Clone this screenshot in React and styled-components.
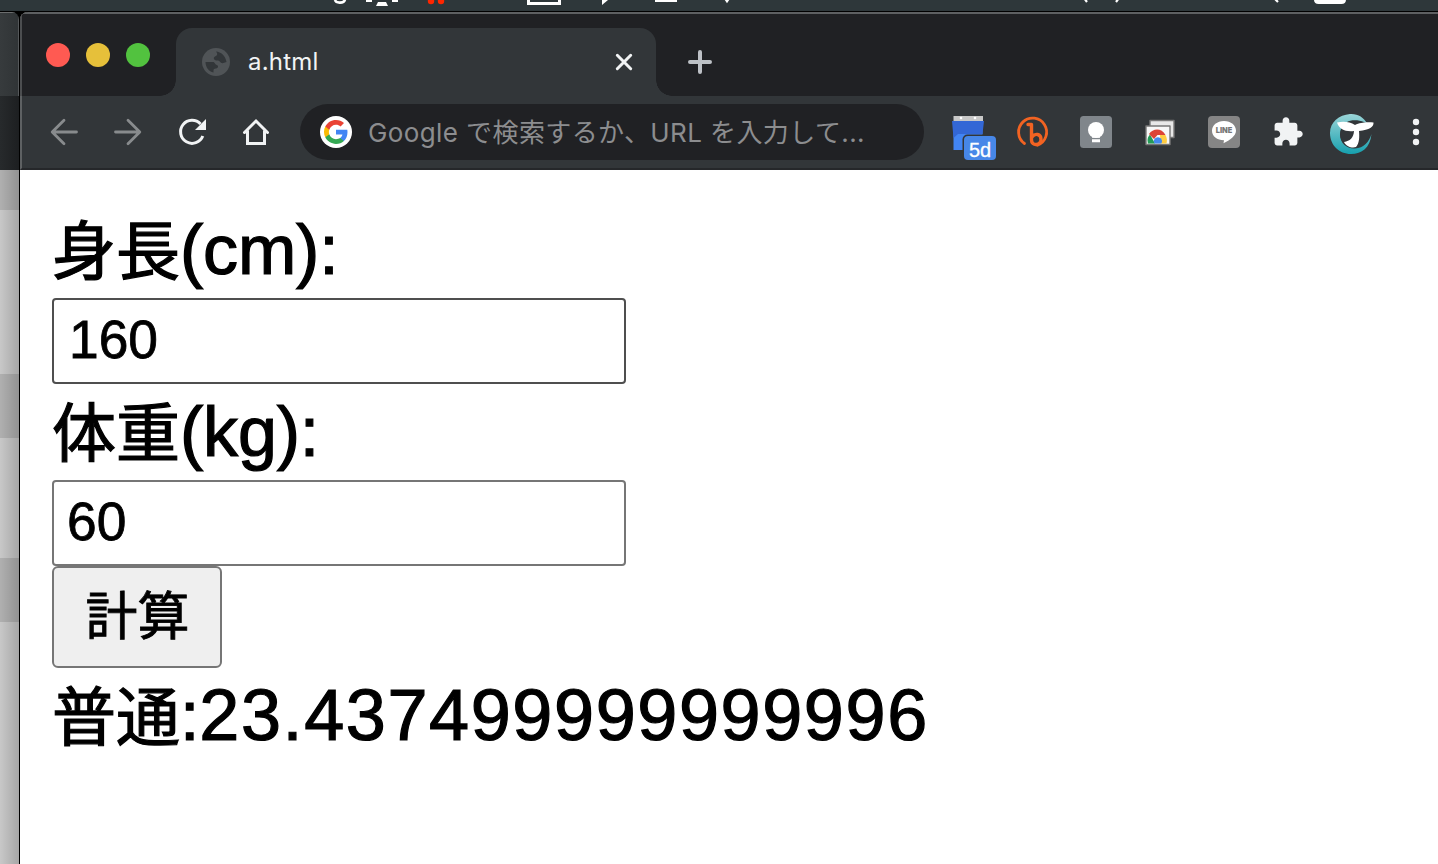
import React, { useState } from 'react'
import styled, { createGlobalStyle } from 'styled-components'

const App = () => {
    const [height, setHeight] = useState('160');
    const [weight, setWeight] = useState('60');
    const [result, setResult] = useState({ label: '普通', bmi: '23.437499999999996' });

    const calculate = () => {
        const m = Number(height) / 100;
        const bmi = Number(weight) / (m * m);
        const label = bmi < 18.5 ? '痩せ' : bmi < 25 ? '普通' : '肥満';
        setResult({ label, bmi: String(bmi) });
    }

    return (
        <StScreen>
            <GlobalStyle />
            <MenuBar />
            <StDesktop>
                <StBackWindow>
                    <StBackTabs />
                    <StBackToolbar />
                    <StBackPage />
                </StBackWindow>
                <StWindow>
                    <TabStrip />
                    <Toolbar />
                    <StPage>
                        <StLabel>身長<StLatin>(cm):</StLatin></StLabel>
                        <StInput $active value={height} onChange={(e) => setHeight(e.target.value)} />
                        <StLabel>体重<StLatin>(kg):</StLatin></StLabel>
                        <StInput value={weight} onChange={(e) => setWeight(e.target.value)} />
                        <StButton onClick={calculate}>計算</StButton>
                        <StLabel>{result.label}<StLatin>:</StLatin><StLatin $wide>{result.bmi}</StLatin></StLabel>
                    </StPage>
                </StWindow>
            </StDesktop>
        </StScreen>
    )
}

const MenuBar = () => (
    <StMenuBar>
        <svg width="1438" height="12" fill="none" stroke="#fff" strokeWidth="2.6">
            <path d="M335 0c1 3.600 9 3.600 10-.5" />
            <path d="M366 .5h6M392 .5h6" strokeWidth="3" />
            <path d="M378 2h8l2 4h-12z" fill="#fff" stroke="none" />
            <circle cx="431" cy="1" r="3.200" fill="#ff2600" stroke="none" />
            <circle cx="441" cy="1" r="3.200" fill="#ff2600" stroke="none" />
            <path d="M528.500-2v5.500h31V-2" strokeWidth="3" />
            <path d="M602 0h6l-6 5z" fill="#fff" stroke="none" />
            <path d="M655 .8h22" strokeWidth="2.400" />
            <path d="M725-2l2 3 2-3" />
            <path d="M1084-2l3 4M1119-2l-3 4M1274-2l4 4" strokeWidth="2.200" />
            <path d="M1314-2v1.500c0 3 1.500 4.500 4.500 4.500h23c3 0 4.500-1.500 4.500-4.500V-2z" fill="#fff" stroke="none" />
        </svg>
    </StMenuBar>
)

const TabStrip = () => (
    <StTabStrip>
        <StLights>
            <StLight $color="#ff5a52" />
            <StLight $color="#e6c03a" />
            <StLight $color="#52c23f" />
        </StLights>
        <StTab>
            <svg width="28" height="28">
                <circle cx="14" cy="14" r="14" fill="#505457" />
                <g fill="#323639">
                    <path d="M14 3.500c5 .5 9.500 4 10.500 10.500l-4 1.200c-2.500 0-2.500-2.700-5-2.700-1.500 0-3-.3-3.500-1.500-.8-2 1.500-2.500 2.800-3.700C15.800 6 15 5 14 3.500z" />
                    <path d="M3.500 14h7.500c2 0 1.500 2.500 4 3 1.500.5 1.300 2.700 0 3.200-1.500.6-3.500.3-3.500 2v2.200C7 23.500 3.500 19.500 3.500 14z" />
                </g>
            </svg>
            <StTabTitle>a.html</StTabTitle>
            <svg width="20" height="20" stroke="#f1f3f4" strokeWidth="3" strokeLinecap="round">
                <path d="M3.300 3.300l13.400 13.400M16.700 3.300L3.300 16.700" />
            </svg>
        </StTab>
        <StNewTab width="26" height="26" stroke="#bdc1c6" strokeWidth="4" strokeLinecap="round">
            <path d="M3 13h20M13 3v20" />
        </StNewTab>
    </StTabStrip>
)

const Toolbar = () => (
    <StToolbar>
        <StSlot $muted>
            <path d="M44.500 36H20.500M32 24.200L20.200 36 32 47.800" />
        </StSlot>
        <StSlot $muted>
            <path d="M19.500 36h24M32 24.200L43.800 36 32 47.800" />
        </StSlot>
        <StSlot>
            <path d="M42.800 40A11.500 11.500 0 1 1 40.500 28" strokeWidth="3" strokeLinecap="butt" />
            <path d="M46 23v11H35z" fill="#f1f3f4" stroke="none" />
        </StSlot>
        <StSlot>
            <path d="M20.500 36.500L32 25l11.500 11.500M23.500 35v12.500h17V35" strokeWidth="3" strokeLinejoin="miter" />
        </StSlot>
        <StOmnibox>
            <svg width="32" height="32" viewBox="0 0 32 32">
                <circle cx="16" cy="16" r="16" fill="#fff" />
                <g transform="translate(2.900 2.900) scale(1.09)">
                    <path fill="#4285f4" d="M22.560 12.250c0-.78-.07-1.530-.2-2.250H12v4.260h5.920c-.26 1.370-1.040 2.530-2.210 3.310v2.770h3.570c2.080-1.920 3.280-4.740 3.280-8.090z" />
                    <path fill="#34a853" d="M12 23c2.970 0 5.460-.98 7.280-2.660l-3.570-2.770c-.98.66-2.230 1.060-3.710 1.060-2.860 0-5.290-1.930-6.160-4.530H2.180v2.840C3.990 20.530 7.700 23 12 23z" />
                    <path fill="#fbbc05" d="M5.840 14.090c-.22-.66-.35-1.360-.35-2.090s.13-1.430.35-2.090V7.070H2.180C1.430 8.550 1 10.220 1 12s.43 3.450 1.180 4.930l2.850-2.220.81-.62z" />
                    <path fill="#ea4335" d="M12 5.380c1.620 0 3.060.56 4.210 1.640l3.150-3.150C17.450 2.090 14.970 1 12 1 7.700 1 3.990 3.470 2.180 7.070l3.660 2.840c.87-2.600 3.300-4.530 6.160-4.530z" />
                </g>
            </svg>
            <StHint>Google で検索するか、URL を入力して...</StHint>
        </StOmnibox>
        <StSlot>
            <g stroke="none">
                <path d="M17.500 34h29v20h-29z" fill="#4285f4" />
                <path d="M16 25h32l-1.500 13H22l-4.500 4z" fill="#3367d6" />
                <path d="M17.500 20h29.500v5h-29.500z" fill="#c8c8c8" />
                <circle cx="25" cy="22" r="1.300" fill="#fff" />
                <circle cx="39" cy="22" r="1.300" fill="#fff" />
                <rect x="26.500" y="38.500" width="35" height="27" rx="5" fill="#323639" />
                <rect x="28" y="40" width="32" height="24" rx="4" fill="#4787e8" />
                <StBadgeText x="44" y="60.500">5d</StBadgeText>
            </g>
        </StSlot>
        <StSlot>
            <g stroke="#f26322">
                <path d="M24.500 47.500A14 14 0 1 1 37.500 49.200" strokeWidth="2.800" />
                <path d="M28 28.500h3.500V44c0 6.500 9.500 5.500 9.500-.5 0-6-6-6.500-9-2.500" strokeWidth="3.400" />
            </g>
        </StSlot>
        <StSlot>
            <g stroke="none">
                <rect x="16" y="20" width="32" height="32" rx="3.500" fill="#80868b" />
                <circle cx="32" cy="34" r="8" fill="#fff" />
                <path d="M28 38h8v3.800h-8zM28 43.200h8v3h-8z" fill="#fff" />
            </g>
        </StSlot>
        <StSlot>
            <g strokeWidth="1.400" stroke="#777">
                <path d="M22 24.500h24v17H22z" fill="#e8e8e8" />
                <path d="M18 30h24v18.500H18z" fill="#f7f7f7" />
            </g>
            <g stroke="none">
                <path d="M20 47.500a9.300 9.300 0 0 1 2-9l5 9z" fill="#249b57" />
                <path d="M21 38c4-6 12.500-6.500 16.500 1h-8l-3.500 4z" fill="#dc4436" />
                <path d="M32 39h5.500c1.500 3 1.800 5.500 1 8.500h-6z" fill="#ffcd41" />
                <path d="M26.500 47.500a4 4 0 1 1 6.800 0z" fill="#4589ee" />
            </g>
        </StSlot>
        <StSlot>
            <g stroke="none">
                <rect x="16" y="20" width="32" height="32" rx="4" fill="#858585" />
                <path d="M32 25c7 0 12 4.300 12 9.800 0 5-6 9.500-12.500 12.500l.5-3c-7 0-12-4-12-9.500S25 25 32 25z" fill="#fff" />
                <StLineText x="32" y="37.300">LINE</StLineText>
            </g>
        </StSlot>
        <StSlot>
            <path transform="translate(15.900 20) scale(1.340)" fill="#f1f3f4" stroke="none" d="M20.500 11H19V7c0-1.100-.9-2-2-2h-4V3.500C13 2.120 11.880 1 10.500 1S8 2.120 8 3.500V5H4c-1.100 0-1.990.9-1.990 2v3.800H3.500c1.490 0 2.700 1.210 2.700 2.700s-1.210 2.700-2.700 2.700H2V20c0 1.100.9 2 2 2h3.800v-1.500c0-1.490 1.210-2.700 2.700-2.700 1.490 0 2.700 1.210 2.700 2.700V22H17c1.100 0 2-.9 2-2v-4h1.500c1.380 0 2.500-1.120 2.500-2.500S21.880 11 20.500 11z" />
        </StSlot>
        <StSlot>
            <defs>
                <linearGradient id="wave" x1="0" y1="0" x2="0" y2="1">
                    <stop offset="0" stopColor="#9ad5d8" />
                    <stop offset="1" stopColor="#16a0ae" />
                </linearGradient>
            </defs>
            <g stroke="none">
                <path fillRule="evenodd" fill="url(#wave)" d="M30 18c-11 1-20 8-20 19 0 12 9 21 21 21 11 0 19-6 20.500-20C49 46 44 52 35 52.500c-8 .5-15-5-15-14 0-5 2-8 4.500-11 5-3 14-3 22.500-.500C43.500 21.500 38 17.500 30 18z" />
                <path fill="#323639" d="M22 32c3 3 7 3.500 11 3-1 5-3 8-7 9.500l-2 2.500c-4-3.500-5-10-2-15zM39 35l10-1c1 6-3 12-10 14.500z" />
                <path fill="#323639" d="M27 26c3-2 11-2.500 17 0l-8 2.500z" />
                <path fill="#fff" d="M17 26.500c7-1.500 13-.5 18 2.500 5-2 9-3 18.500-2.500.5 4-4 7.500-14.500 8.500.5 6 .5 12-3 16-4 1.500-10-.5-12-5 6-1 9.500-4 10-11-9 1-15-2-17-8.500z" />
            </g>
        </StSlot>
        <StSlot>
            <g fill="#f1f3f4" stroke="none">
                <circle cx="32" cy="26" r="3.200" />
                <circle cx="32" cy="36" r="3.200" />
                <circle cx="32" cy="46" r="3.200" />
            </g>
        </StSlot>
    </StToolbar>
)

const GlobalStyle = createGlobalStyle`
    body {
        margin: 0;
        overflow: hidden;
    }
    * {
        box-sizing: border-box;
    }
`;
const StScreen = styled.div`
    display: flex;
    flex-direction: column;
    width: 1438px;
    height: 864px;
    overflow: hidden;
    background: #000;
    font-family: Inter, "Noto Sans CJK JP", sans-serif;
`;
const StMenuBar = styled.div`
    height: 12px;
    flex-shrink: 0;
    background: #2e373a;
    border-bottom: 1px solid #000;
    svg {
        display: block;
    }
`;
const StDesktop = styled.div`
    display: flex;
    flex: 1;
    min-height: 0;
`;
const StBackWindow = styled.div`
    display: flex;
    flex-direction: column;
    width: 20px;
    flex-shrink: 0;
    border-right: 1px solid #000;
    border-top-right-radius: 8px;
    overflow: hidden;
`;
const StBackTabs = styled.div`
    height: 84px;
    background: linear-gradient(90deg, #373b3d, #303436);
    border-top: 1px solid #6b6d6e;
    border-right: 1px solid #55585a;
`;
const StBackToolbar = styled.div`
    height: 74px;
    background: linear-gradient(90deg, #272a2c, #1d1f21);
`;
const StBackPage = styled.div`
    flex: 1;
    background:
        linear-gradient(90deg, rgba(0, 0, 0, 0), rgba(0, 0, 0, 0.17)),
        linear-gradient(#b0b0b0 40px, #c8c8c8 40px, #c8c8c8 204px, #b0b0b0 204px, #b0b0b0 268px, #c8c8c8 268px, #c8c8c8 388px, #b0b0b0 388px, #b0b0b0 452px, #c8c8c8 452px);
`;
const StWindow = styled.div`
    display: flex;
    flex-direction: column;
    flex: 1;
    min-width: 0;
    border-top-left-radius: 8px;
    overflow: hidden;
    background: #fff;
`;
const StTabStrip = styled.div`
    display: flex;
    height: 84px;
    flex-shrink: 0;
    background: #202124;
    border-top: 2px solid #5e6062;
    border-left: 2px solid #4c4e50;
`;
const StLights = styled.div`
    display: flex;
    gap: 16px;
    width: 154px;
    padding: 29px 0 0 24px;
`;
const StLight = styled.div`
    width: 24px;
    height: 24px;
    border-radius: 50%;
    background: ${(props) => props.$color};
`;
const StTab = styled.div`
    position: relative;
    display: flex;
    align-items: center;
    width: 480px;
    height: 68px;
    margin-top: 14px;
    padding: 0 22px 0 26px;
    border-radius: 16px 16px 0 0;
    background: #323639;
    &::before,
    &::after {
        content: "";
        position: absolute;
        bottom: 0;
        width: 16px;
        height: 16px;
    }
    &::before {
        left: -16px;
        background: radial-gradient(circle at 0 0, transparent 15.5px, #323639 16px);
    }
    &::after {
        right: -16px;
        background: radial-gradient(circle at 100% 0, transparent 15.5px, #323639 16px);
    }
`;
const StTabTitle = styled.span`
    flex: 1;
    padding: 0 0 2px 18px;
    color: #f1f3f4;
    font-size: 24px;
    letter-spacing: 0.2px;
`;
const StNewTab = styled.svg`
    margin: 35px 0 0 31px;
`;
const StToolbar = styled.div`
    display: flex;
    height: 74px;
    flex-shrink: 0;
    padding-left: 10px;
    background: #323639;
    border-left: 2px solid #5e6163;
    border-bottom: 2px solid #25272a;
    overflow: hidden;
`;
const StSlot = styled.svg.attrs({ width: 64, height: 72, viewBox: '0 0 64 72' })`
    flex-shrink: 0;
    fill: none;
    stroke: ${(props) => (props.$muted ? '#888b8d' : '#f1f3f4')};
    stroke-width: 2.8px;
    stroke-linecap: round;
    stroke-linejoin: round;
`;
const StBadgeText = styled.text`
    fill: #fff;
    font-family: "Liberation Sans", sans-serif;
    font-size: 20px;
    text-anchor: middle;
    stroke: #fff;
    stroke-width: 0.3px;
`;
const StLineText = styled.text`
    fill: #777;
    font-family: Inter, sans-serif;
    font-size: 7.4px;
    font-weight: 900;
    text-anchor: middle;
`;
const StOmnibox = styled.div`
    display: flex;
    align-items: center;
    width: 624px;
    height: 56px;
    flex-shrink: 0;
    margin: 8px 12px;
    padding-left: 20px;
    border-radius: 28px;
    background: #202124;
`;
const StHint = styled.span`
    padding: 0 0 3px 16px;
    color: #8c8d8f;
    font-size: 26px;
    letter-spacing: 0.4px;
    white-space: nowrap;
`;
const StPage = styled.div`
    display: flex;
    flex-direction: column;
    align-items: flex-start;
    flex: 1;
    padding: 32px;
    background: #fff;
`;
const StLabel = styled.div`
    height: 96px;
    color: #000;
    font-family: "Noto Sans CJK JP", sans-serif;
    font-size: 64px;
    line-height: 88px;
    white-space: nowrap;
    -webkit-text-stroke: 1.2px #000;
`;
const StLatin = styled.span`
    font-family: "Liberation Sans", sans-serif;
    font-size: ${(props) => (props.$wide ? '72px' : '70px')};
    line-height: 0;
    letter-spacing: ${(props) => (props.$wide ? '1.6px' : '-0.2px')};
`;
const StInput = styled.input`
    width: 574px;
    height: 86px;
    padding: 0 13px 4px;
    border: 2px solid ${(props) => (props.$active ? '#4f4f4f' : '#767676')};
    border-radius: 4px;
    outline: none;
    background: #fff;
    color: #000;
    font-family: "Liberation Sans", sans-serif;
    font-size: 53.33px;
    text-indent: ${(props) => (props.$active ? '2px' : '0')};
    -webkit-text-stroke: 0.8px #000;
`;
const StButton = styled.button`
    width: 170px;
    height: 102px;
    padding: 0 0 9px 1px;
    border: 2px solid #767676;
    border-radius: 6px;
    background: #efefef;
    color: #000;
    font-family: "Noto Sans CJK JP", sans-serif;
    font-size: 52px;
    -webkit-text-stroke: 0.8px #000;
`;

export default App
